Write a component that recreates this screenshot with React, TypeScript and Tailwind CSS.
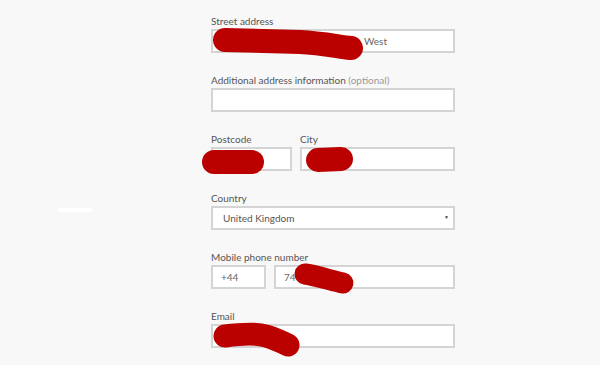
const Label = ({ children }: { children: React.ReactNode }) => (
  <label className="block text-[10px] leading-[14px] mb-[1px] text-[#555]">{children}</label>
);

const Box = ({ value, className = "" }: { value?: string; className?: string }) => (
  <div className={`h-[24px] bg-white border-2 border-[#d4d4d4] flex items-center px-[8px] text-[10px] text-[#666] ${className}`}>
    {value}
  </div>
);

export default function App() {
  return (
    <div className="relative w-[600px] h-[365px] overflow-hidden bg-[#f8f8f8]" style={{ fontFamily: "Lato, 'Open Sans', sans-serif" }}>
      <div className="ml-[211px] w-[244px] pt-[14px] flex flex-col gap-[20px]">
        <div>
          <Label>Street address</Label>
          <Box className="w-full justify-end pr-[66px]" value="West" />
        </div>
        <div>
          <Label>
            Additional address information <span className="text-[#999]">(optional)</span>
          </Label>
          <Box className="w-full" />
        </div>
        <div className="flex gap-[8px]">
          <div className="w-[81px]">
            <Label>Postcode</Label>
            <Box className="w-full" />
          </div>
          <div className="flex-1">
            <Label>City</Label>
            <Box className="w-full" />
          </div>
        </div>
        <div>
          <Label>Country</Label>
          <div className="w-full h-[24px] bg-white border-2 border-[#d4d4d4] flex items-center justify-between pl-[10px] pr-[4px] text-[10px] text-[#555]">
            <span>United Kingdom</span>
            <span className="text-[5px] text-[#444]">▼</span>
          </div>
        </div>
        <div>
          <Label>Mobile phone number</Label>
          <div className="flex gap-[8px]">
            <Box className="w-[55px]" value="+44" />
            <Box className="flex-1" value="74" />
          </div>
        </div>
        <div>
          <Label>Email</Label>
          <Box className="w-full" />
        </div>
      </div>

      {/* redaction scribbles */}
      <svg className="absolute inset-0" width="600" height="365" fill="none" stroke="#bb0000" strokeLinecap="round" strokeLinejoin="round">
        <path d="M225 40 L300 42 C320 43 335 46 351 48" strokeWidth="24" />
        <path d="M214 162 L252 162" strokeWidth="24" />
        <path d="M318 160 L341 159" strokeWidth="24" />
        <path d="M305 274 C318 276 330 280 343 283" strokeWidth="21" />
        <path d="M225 336 C240 334 256 333 266 336 C276 339 282 342 288 345" strokeWidth="23" />
        <path d="M60 210 L90 210" stroke="#ffffff" strokeWidth="4" opacity="0.9" />
      </svg>
    </div>
  );
}
